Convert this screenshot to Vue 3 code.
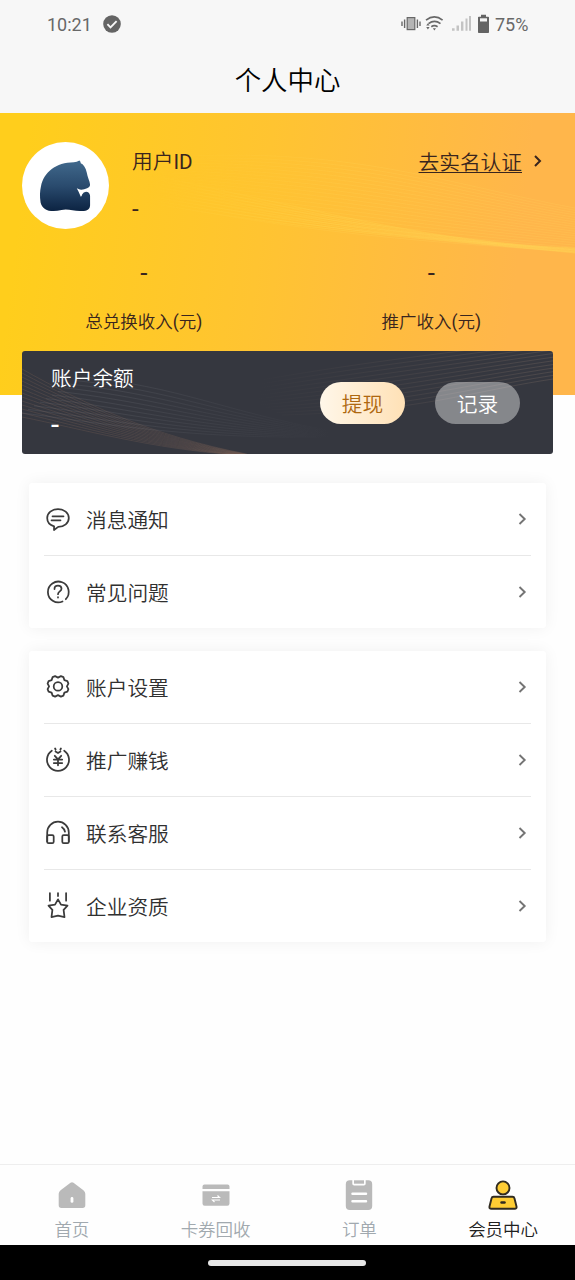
<script setup>
const wave = (count, from, to) =>
  Array.from({ length: count }, (_, i) => {
    const t = i / (count - 1)
    const p = from.map((v, k) => (v + (to[k] - v) * t).toFixed(1))
    return `M${p[0]} ${p[1]}C${p[2]} ${p[3]} ${p[4]} ${p[5]} ${p[6]} ${p[7]}`
  })

const heroWaves = wave(
  20,
  [100, 50, 330, 24, 430, 68, 575, 95],
  [60, 72, 300, 122, 420, 128, 575, 139]
)
const heroGlow = wave(
  9,
  [160, 64, 330, 100, 430, 129, 575, 135],
  [160, 92, 330, 120, 430, 126, 575, 140]
)
const cardWavesLeft = wave(
  13,
  [0, 18, 60, 52, 130, 85, 225, 103],
  [0, 66, 60, 78, 130, 98, 215, 104]
)
const cardWavesMid = wave(
  11,
  [60, 26, 160, 36, 200, 60, 310, 80],
  [0, 62, 80, 72, 160, 88, 310, 86]
)
const cardWavesRight = wave(
  12,
  [200, 36, 340, 10, 430, 2, 531, -12],
  [260, 64, 400, 60, 440, 42, 531, 28]
)

const stats = [
  { value: '-', label: '总兑换收入', unit: '元' },
  { value: '-', label: '推广收入', unit: '元' }
]
const groups = [
  [
    { icon: 'message', label: '消息通知' },
    { icon: 'help', label: '常见问题' }
  ],
  [
    { icon: 'settings', label: '账户设置' },
    { icon: 'money', label: '推广赚钱' },
    { icon: 'service', label: '联系客服' },
    { icon: 'medal', label: '企业资质' }
  ]
]
const tabs = [
  { icon: 'home', label: '首页' },
  { icon: 'card', label: '卡券回收' },
  { icon: 'order', label: '订单' },
  { icon: 'member', label: '会员中心', active: true }
]
</script>

<template>
  <div class="phone">
    <header class="top">
      <div class="status">
        <span class="time">10:21</span>
        <svg class="check" width="18" height="18" viewBox="0 0 18 18">
          <circle cx="9" cy="9" r="8.8" fill="#646464" />
          <path d="M4.4 9.2l3.1 3.1 6.1-6.2" fill="none" stroke="#f7f7f7" stroke-width="1.9" />
        </svg>
        <svg class="signals" width="90" height="20" viewBox="0 0 90 20">
          <g fill="none" stroke="#686868" stroke-width="1.2">
            <rect x="6.2" y="3.6" width="7.6" height="12" fill="#b4b4b4" />
            <path d="M3.6 5.5v8.5M1 7.5v4.5M16.4 5.5v8.5M19 7.5v4.5" stroke-width="1.4" />
            <path d="M25 6.2q8.400-6.500 16.600 0M27.500 9.600q6-4.400 12 0M30.300 12.700q3-2 6.300 0" stroke-width="1.700" />
          </g>
          <path d="M31.800 14.300h3.200l-1.600 2.200zM25.200 11.500l1.700-2.300 1.700 2.300zM25.200 13l1.700 2.600 1.700-2.600z" fill="#686868" />
          <path d="M51 14.200h2.600v2.600H51zM55.500 11.500H58v5.300h-2.500zM60 7.500h2.400v9.300H60zM64.500 4.500h2v12.300h-2zM68 2h2v14.800h-2z" fill="#c3c3c3" />
          <path d="M80 .7h5v2h2.200q.8 0 .8.800v14.800q0 .8-.8.800h-9.400q-.8 0-.8-.8V3.500q0-.8.800-.8H80z" fill="#646464" />
          <path d="M79 4.300h7v3.200h-7z" fill="#f4f4f4" />
        </svg>
        <span class="battery">75%</span>
      </div>
      <h1 class="title">个人中心</h1>
    </header>

    <section class="hero">
      <svg class="waves hero-waves" width="575" height="282" viewBox="0 0 575 282" fill="none">
        <path v-for="d in heroWaves" :key="d" :d="d" stroke="#ffdf67" stroke-opacity=".2" stroke-width=".8" />
        <path v-for="d in heroGlow" :key="d" :d="d" stroke="#ffe35a" stroke-opacity=".26" stroke-width=".9" />
      </svg>
      <div class="profile">
        <svg class="avatar" width="87" height="87" viewBox="0 0 262 262">
          <defs>
            <linearGradient id="bear" x1="0" y1="0" x2="0" y2="1">
              <stop offset="0" stop-color="#41698c" />
              <stop offset=".5" stop-color="#2a4b6e" />
              <stop offset="1" stop-color="#0c2342" />
            </linearGradient>
          </defs>
          <circle cx="131" cy="131" r="131" fill="#fff" />
          <path fill="url(#bear)" d="M173 56q4 3 4 8c9 4 15 14 18 28 2 14 9 26 10 36q0 8-9 11-12 6-22 4l-9-4q7 12 12 26 3-2 4-7 4-8 12-8 10 0 12 12v29c-1 16-14 17-30 17-22 0-38-8-56-3-32 8-58 1-63-23-3-20-2-34 1-48 9-44 45-72 99-73q9 0 17-5z" />
        </svg>
        <div class="user">
          <div class="line">用户<span class="latin">ID</span></div>
          <div class="dash">-</div>
        </div>
        <div class="verify">
          <span class="verify-text">去实名认证</span>
          <svg width="8" height="12" viewBox="0 0 8 12"><path d="M1 1l5 5-5 5" fill="none" stroke="#39251e" stroke-width="2" /></svg>
        </div>
      </div>
      <div class="stats">
        <div v-for="s in stats" :key="s.label" class="stat">
          <div class="stat-value">{{ s.value }}</div>
          <div class="stat-label">{{ s.label }}<span class="latin">(</span>{{ s.unit }}<span class="latin">)</span></div>
        </div>
      </div>
    </section>

    <section class="balance">
      <svg class="waves" width="531" height="103" viewBox="0 0 531 103" fill="none">
        <defs>
          <linearGradient id="fade-out" gradientUnits="userSpaceOnUse" x1="0" y1="0" x2="310" y2="0">
            <stop offset=".3" stop-color="#8c8f96" stop-opacity=".2" />
            <stop offset="1" stop-color="#8c8f96" stop-opacity="0" />
          </linearGradient>
          <linearGradient id="fade-in" gradientUnits="userSpaceOnUse" x1="200" y1="0" x2="531" y2="0">
            <stop offset=".1" stop-color="#a88c78" stop-opacity="0" />
            <stop offset="1" stop-color="#a88c78" stop-opacity=".26" />
          </linearGradient>
        </defs>
        <g stroke-width=".8">
          <path v-for="d in cardWavesLeft" :key="d" :d="d" stroke="#a07a62" stroke-opacity=".25" />
          <path v-for="d in cardWavesMid" :key="d" :d="d" stroke="url(#fade-out)" />
          <path v-for="d in cardWavesRight" :key="d" :d="d" stroke="url(#fade-in)" />
        </g>
      </svg>
      <div class="balance-info">
        <div class="line">账户余额</div>
        <div class="balance-value">-</div>
      </div>
      <button class="pill withdraw">提现</button>
      <button class="pill record">记录</button>
    </section>

    <section v-for="(group, g) in groups" :key="g" class="menu">
      <div v-for="item in group" :key="item.label" class="row">
        <svg class="row-icon" width="26" height="30" viewBox="0 0 26 30" fill="none" stroke="#3b3b3b" stroke-width="1.750" stroke-linejoin="round" stroke-linecap="round">
          <g v-if="item.icon === 'message'">
            <path d="M9.100 22.300C4.500 21 2.200 17.700 2.200 14c0-5.200 4.700-9 10.800-9s10.800 3.800 10.800 9c0 5-4.600 8.900-10.600 8.900L9 26z" />
            <path d="M7.500 12.300h11M6.500 16.300h9" />
          </g>
          <g v-else-if="item.icon === 'help'">
            <path d="M17.500 24.500A10.400 10.400 0 1 1 20.800 22.200" />
            <path d="M9.500 12c0-2.200 1.600-3.300 3.500-3.300s3.500 1.200 3.500 3.100c0 2.500-3.500 2.800-3.500 5.400M13 20.200v.3" />
          </g>
          <g v-else-if="item.icon === 'settings'" transform="translate(0 -.8)">
            <path d="M10.100 4.900l2.900 1.500 2.900-1.500 2.500 1 1 3 3 1 1 2.500-1.500 2.800 1.500 2.800-1 2.400-3 1-1 3-2.500 1-2.900-1.500-2.900 1.500-2.500-1-1-3-3-1-1-2.400 1.500-2.800-1.500-2.800 1-2.500 3-1 1-3z" />
            <circle cx="13" cy="15.200" r="4.300" />
          </g>
          <g v-else-if="item.icon === 'money'">
            <path d="M6.800 5.700a11 11 0 1 0 12.400 0M10.100 3.500l.5 1M15.900 3.500l-.5 1M10.500 6.400l2.500 1.600 2.500-1.600" />
            <path d="M9.800 10.800l3.200 3.500 3.200-3.500M8.800 14.500h8.400M8.800 18h8.400M13 14.300v6" />
          </g>
          <g v-else-if="item.icon === 'service'">
            <path d="M2.200 23.500v-9a10.800 10.800 0 0 1 21.600 0v9M17 9.200q2.400 1.600 3 4.500" />
            <rect x="2.200" y="17.200" width="6.500" height="8" rx="1.400" />
            <rect x="17.300" y="17.200" width="6.500" height="8" rx="1.400" />
          </g>
          <g v-else>
            <path d="M4.900 2v7.700M13 2v3M21.100 2v7.700" />
            <path d="M13 8.300l3 5.400 6.500 1-3.900 4.200.9 7.200-6.500-1.400-6.500 1.400.9-7.200-3.900-4.200 6.500-1z" />
          </g>
        </svg>
        <span class="row-label">{{ item.label }}</span>
        <svg class="arrow" width="9" height="12" viewBox="0 0 9 12"><path d="M1.500 1l5.200 5-5.200 5" fill="none" stroke="#747474" stroke-width="1.900" /></svg>
      </div>
    </section>

    <nav class="tabs">
      <div v-for="t in tabs" :key="t.label" class="tab" :class="{ active: t.active }">
        <svg width="30" height="32" viewBox="0 0 30 32">
          <g v-if="t.icon === 'home'">
            <path d="M3.600 11.300L13.500 3.700q1.500-1.100 3 0l9.900 7.600q1.900 1.500 1.900 3.500v11.500q0 2.700-2.700 2.700H4.400q-2.700 0-2.700-2.700V14.800q0-2 1.900-3.500z" fill="#bababa" />
            <rect x="13.600" y="18" width="2.800" height="5.800" rx="1.400" fill="#fff" />
          </g>
          <g v-else-if="t.icon === 'card'">
            <path d="M1.500 10V7.500q0-2 2-2h23q2 0 2 2V10zM1.500 12.300h27v12.200q0 2.200-2.200 2.200H3.700q-2.200 0-2.200-2.200z" fill="#bababa" />
            <path d="M11 18.500h7.500l-2-2M19 21h-7.500l2 2" fill="none" stroke="#fff" stroke-width="1.200" />
          </g>
          <g v-else-if="t.icon === 'order'">
            <path d="M5.800 1.300h2.500v3.500q0 1.800 1.800 1.800h9.800q1.800 0 1.800-1.800V1.300h2.500q4 0 4 4V27q0 4-4 4H5.800q-4 0-4-4V5.300q0-4 4-4z" fill="#b9b9b9" />
            <path d="M10 1.300h10v3.400H10z" fill="#b9b9b9" />
            <path d="M8.500 14.700h13.500M8.500 22.300h13.500" stroke="#fff" stroke-width="2.500" stroke-linecap="round" />
          </g>
          <g v-else fill="#fecd34" stroke="#302b20" stroke-width="1.900">
            <circle cx="15" cy="8.900" r="6.500" />
            <path d="M5.500 17.800h19q1.600 0 2 1.700l2 8q.4 2.200-1.800 2.200H3.300q-2.200 0-1.800-2.200l2-8q.4-1.700 2-1.700z" />
            <path d="M13.500 23.500h3" stroke-linecap="round" stroke-width="2.500" />
          </g>
        </svg>
        <span>{{ t.label }}</span>
      </div>
    </nav>
    <footer class="gesture"><div class="handle"></div></footer>
  </div>
</template>

<style>
body {
  margin: 0;
}
</style>

<style scoped>
.phone {
  width: 575px;
  height: 1280px;
  display: flex;
  flex-direction: column;
  overflow: hidden;
  background: #fefefe;
  color: #303030;
  font-family: Roboto, "Noto Sans CJK SC", sans-serif;
  font-size: 20.7px;
  font-weight: 350;
}
.latin {
  font-weight: 400;
}
.top {
  height: 113px;
  flex: none;
  background: #f7f7f7;
}
.status {
  height: 48px;
  display: flex;
  align-items: center;
  padding: 0 43px 0 47px;
  box-sizing: border-box;
  color: #686868;
  font-size: 18px;
  font-weight: 400;
}
.time {
  width: 55.500px;
}
.signals {
  margin-left: auto;
}
.battery {
  width: 37px;
  margin-left: 4px;
  white-space: nowrap;
}
.title {
  margin: 0;
  color: #000;
  font-size: 26.400px;
  font-weight: 350;
  line-height: 66px;
  text-align: center;
}
.hero {
  position: relative;
  height: 282px;
  flex: none;
  color: #39251e;
  background: linear-gradient(97deg, #ffce1c 5%, #ffc431 45%, #ffb64b 88%);
}
.waves {
  position: absolute;
  inset: 0;
}
.hero-waves {
  mask-image: linear-gradient(90deg, transparent 25%, #000 62%);
}
.profile {
  position: relative;
  display: flex;
  height: 117px;
  padding: 29px 33px 0 22px;
}
.avatar {
  flex: none;
}
.user {
  margin: 1px 0 0 23px;
}
.line {
  line-height: 38px;
}
.dash {
  font-size: 24px;
  font-weight: 400;
  line-height: 56px;
}
.verify {
  margin-left: auto;
  display: flex;
  align-items: center;
  height: 38px;
  gap: 12px;
}
.verify-text {
  text-decoration: underline;
  text-decoration-thickness: 1px;
  text-underline-offset: 2px;
}
.stats {
  position: relative;
  display: flex;
}
.stat {
  flex: 1;
  text-align: center;
}
.stat-value {
  font-size: 26px;
  font-weight: 400;
  line-height: 28px;
}
.stat-label {
  margin-top: 18px;
  font-size: 17.500px;
  line-height: 34px;
}
.balance {
  position: relative;
  display: flex;
  flex: none;
  height: 103px;
  margin: -44px 22px 29px;
  padding: 0 33px 0 29px;
  box-sizing: border-box;
  align-items: center;
  border-radius: 3px;
  overflow: hidden;
  background: #35373f;
  color: #fff;
}
.balance-info {
  position: relative;
  flex: 1;
  align-self: flex-start;
  padding-top: 9px;
}
.balance-value {
  font-size: 29px;
  font-weight: 400;
  line-height: 54px;
}
.pill {
  position: relative;
  width: 85px;
  height: 42px;
  padding: 0;
  border: 0;
  border-radius: 21px;
  font: inherit;
}
.withdraw {
  margin-right: 30px;
  color: #ae6810;
  background: linear-gradient(90deg, #fff7e9, #ffe1b6);
}
.record {
  color: #fff;
  background: rgba(255, 255, 255, 0.4);
}
.menu {
  flex: none;
  margin: 0 29px 22.500px;
  padding: 0 15px;
  border-radius: 3px;
  background: #fff;
  box-shadow: 0 0 16px rgba(0, 0, 0, 0.06);
}
.row {
  display: flex;
  align-items: center;
  height: 72px;
}
.row + .row {
  height: 72.200px;
  border-top: 1px solid #e8e8e8;
}
.row-icon {
  flex: none;
  margin: 0 15.500px 0 0.500px;
}
.row-label {
  flex: 1;
}
.arrow {
  margin-right: 4px;
}
.tabs {
  display: flex;
  height: 81px;
  margin-top: auto;
  flex: none;
  box-sizing: border-box;
  border-top: 1px solid #eee;
  color: #a1a9af;
  font-size: 17.500px;
}
.tab {
  flex: 1;
  display: flex;
  flex-direction: column;
  align-items: center;
  padding-top: 14px;
  line-height: 38px;
}
.tab svg {
  flex: none;
}
.active {
  color: #202020;
}
.gesture {
  display: flex;
  flex: none;
  height: 35px;
  padding-right: 1px;
  justify-content: center;
  align-items: center;
  background: #000;
}
.handle {
  width: 158px;
  height: 6px;
  border-radius: 3px;
  background: #e7e7e7;
}
</style>
